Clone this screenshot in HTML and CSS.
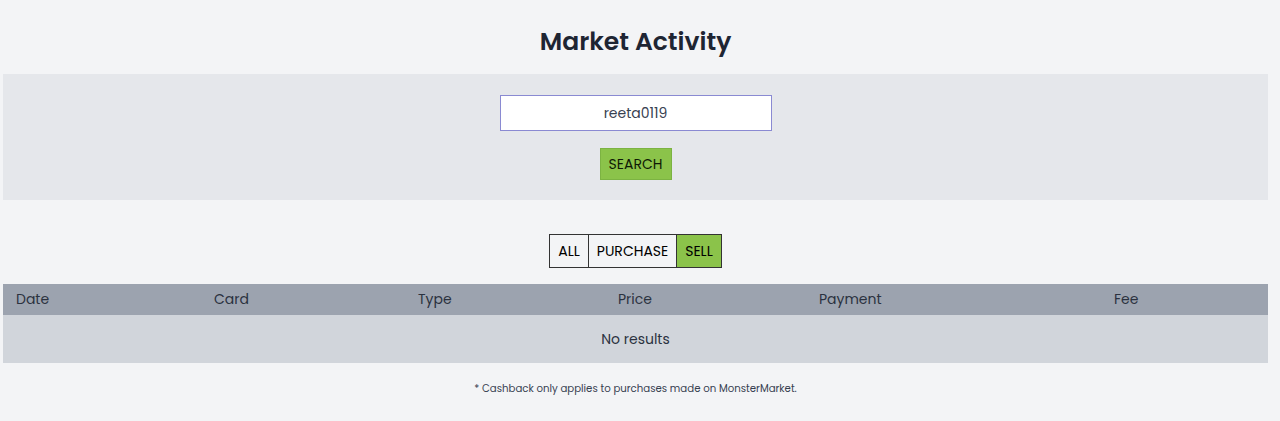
FILE: index.html
```html
<!DOCTYPE html>
<html>
<head>
<meta charset="utf-8">
<link rel="stylesheet" href="styles.css">
</head>
<body>
<div class="page">
  <h1 class="title">Market Activity</h1>
  <div class="search-panel">
    <input class="search-input" type="text" value="reeta0119">
    <button class="search-btn">SEARCH</button>
  </div>
  <div class="filters">
    <button class="filter">ALL</button>
    <button class="filter">PURCHASE</button>
    <button class="filter active">SELL</button>
  </div>
  <div class="table">
    <div class="thead">
      <div>Date</div>
      <div>Card</div>
      <div>Type</div>
      <div>Price</div>
      <div>Payment</div>
      <div>Fee</div>
    </div>
    <div class="empty">No results</div>
  </div>
  <p class="note">* Cashback only applies to purchases made on MonsterMarket.</p>
</div>
</body>
</html>
```
FILE: styles.css
```css
html, body {
  margin: 0;
  padding: 0;
  background: #f3f4f6;
}
body {
  font-family: "Poppins", "Open Sans", "Liberation Sans", sans-serif;
  color: #1f2937;
}
.page {
  width: 1265px;
  margin-left: 3px;
  display: flex;
  flex-direction: column;
  align-items: stretch;
}
.title {
  margin: 0;
  height: 74px;
  display: flex;
  align-items: center;
  justify-content: center;
  font-size: 25px;
  font-weight: 600;
  color: #1e2533;
  padding-top: 10px;
  box-sizing: border-box;
}
.search-panel {
  background: #e5e7eb;
  height: 126px;
  box-sizing: border-box;
  padding-top: 21px;
  display: flex;
  flex-direction: column;
  align-items: center;
}
.search-input {
  width: 272px;
  height: 36px;
  box-sizing: border-box;
  border: 1px solid #8a8ad2;
  background: #fff;
  text-align: center;
  font-family: inherit;
  font-size: 14px;
  color: #374151;
  outline: none;
  padding: 0;
}
.search-btn {
  margin-top: 17px;
  width: 72px;
  height: 32px;
  box-sizing: border-box;
  background: #8bc34a;
  border: 1px solid #7cb342;
  font-family: inherit;
  font-size: 14px;
  font-weight: 400;
  color: #0f1a05;
  padding: 0;
}
.filters {
  margin-top: 34px;
  display: flex;
  justify-content: center;
}
.filter {
  height: 34px;
  box-sizing: border-box;
  background: #f3f4f6;
  border: 1px solid #333;
  border-left: none;
  font-family: inherit;
  font-size: 14px;
  font-weight: 400;
  color: #000;
  padding: 0 8px;
}
.filter:first-child {
  border-left: 1px solid #333;
}
.filter.active {
  background: #8bc34a;
}
.table {
  margin-top: 16px;
}
.thead {
  background: #9ca3af;
  height: 31px;
  display: grid;
  grid-template-columns: 198px 204px 200px 201px 295px 1fr;
  padding-left: 13px;
  align-items: center;
  font-size: 14px;
  color: #2b3240;
}
.empty {
  background: #d1d5db;
  height: 48px;
  display: flex;
  align-items: center;
  justify-content: center;
  font-size: 14px;
  color: #2b3240;
}
.note {
  margin: 18px 0 0;
  text-align: center;
  font-size: 10.2px;
  color: #374151;
}
```
